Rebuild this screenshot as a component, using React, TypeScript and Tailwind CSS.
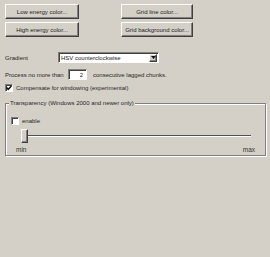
import React from 'react';

const raised =
  "border border-t-white border-l-white border-b-[#404040] border-r-[#404040] shadow-[inset_-1px_-1px_0_#808080]";
const sunken =
  "border border-t-[#808080] border-l-[#808080] border-b-white border-r-white shadow-[inset_1px_1px_0_#404040]";

function Btn({ label, w }: { label: string; w: string }) {
  return (
    <div className={`${raised} ${w} h-[15px] bg-[#d4d0c8] flex items-center justify-center text-[#222]`}>
      {label}
    </div>
  );
}

function Check({ checked }: { checked?: boolean }) {
  return (
    <div className={`${sunken} w-[8px] h-[8px] bg-white flex items-center justify-center`}>
      {checked && (
        <svg width="6" height="6" viewBox="0 0 6 6">
          <path d="M0.5 2.5 L2.2 4.3 L5.5 1" stroke="#111" strokeWidth="1.5" fill="none" />
        </svg>
      )}
    </div>
  );
}

export default function App() {
  return (
    <div
      className="w-[270px] h-[257px] bg-[#d4d0c8] text-[6px] leading-none text-[#262626] overflow-hidden"
      style={{ fontFamily: '"Liberation Sans", Arial, sans-serif' }}
    >
      <div className="pt-[4px] pl-[5px] flex flex-col gap-[3px]">
        <div className="flex gap-[42px]">
          <Btn label="Low energy color..." w="w-[74px]" />
          <Btn label="Grid line color..." w="w-[72px]" />
        </div>
        <div className="flex gap-[42px]">
          <Btn label="High energy color..." w="w-[74px]" />
          <Btn label="Grid background color..." w="w-[72px]" />
        </div>
      </div>

      {/* gradient */}
      <div className="mt-[15px] pl-[5px] flex items-center">
        <span className="w-[53px]">Gradient</span>
        <div className={`${sunken} w-[101px] h-[11px] bg-white flex items-center justify-between`}>
          <span className="pl-[2px] text-[#222]">HSV counterclockwise</span>
          <div className={`${raised} w-[8px] h-[8px] bg-[#d4d0c8] flex items-center justify-center mr-[1px]`}>
            <svg width="5" height="3" viewBox="0 0 5 3">
              <path d="M0 0 H5 L2.5 3 Z" fill="#111" />
            </svg>
          </div>
        </div>
      </div>

      {/* process */}
      <div className="mt-[6px] pl-[5px] flex items-center">
        <span className="w-[63px]">Process no more than</span>
        <div className={`${sunken} w-[19px] h-[11px] bg-white flex items-center justify-end pr-[3px] text-[#222]`}>
          2
        </div>
        <span className="ml-[6px]">consecutive lagged chunks.</span>
      </div>

      {/* compensate */}
      <div className="mt-[4px] pl-[5px] flex items-center gap-[2px]">
        <Check checked />
        <span className="ml-[1px]">Compensate for windowing (experimental)</span>
      </div>

      {/* transparency group */}
      <div className="relative mt-[11px] ml-[5px] w-[261px] h-[53px] border border-[#808080] shadow-[1px_1px_0_white,inset_1px_1px_0_white]">
        <span className="absolute -top-[4px] left-[3px] bg-[#d4d0c8] px-[1px]">
          Transparency (Windows 2000 and newer only)
        </span>
        <div className="mt-[13px] ml-[5px] flex items-center gap-[3px]">
          <Check />
          <span>enable</span>
        </div>
        <div className="relative mt-[4px] ml-[15px] w-[230px] h-[14px] flex items-center">
          <div className="w-full h-[2px] border-t border-t-[#505050] border-b border-b-white" />
          <div className={`${raised} absolute left-0 top-0 w-[7px] h-[14px] bg-[#d4d0c8]`} />
        </div>
        <div className="mt-[4px] pl-[10px] pr-[10px] flex justify-between text-[#333] text-[6.5px]">
          <span>min</span>
          <span>max</span>
        </div>
      </div>
    </div>
  );
}
